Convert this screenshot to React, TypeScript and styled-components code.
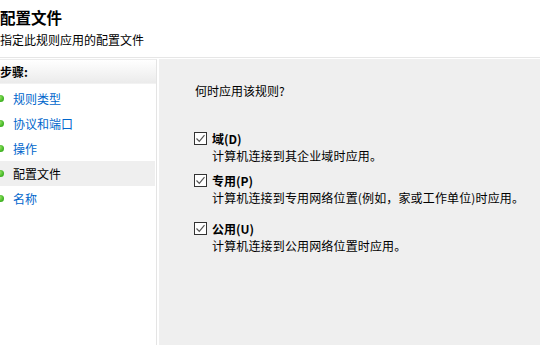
import React from "react";
import styled, { createGlobalStyle } from "styled-components";

const Global = createGlobalStyle`
  html, body { margin: 0; padding: 0; background: #ffffff; }
  body { width: 540px; height: 345px; overflow: hidden; font-family: "Noto Sans CJK SC", "Microsoft YaHei", sans-serif; color: #000; }
  * { box-sizing: border-box; }
`;

const Page = styled.div`
  width: 540px;
  height: 345px;
  display: flex;
  flex-direction: column;
  background: #fff;
`;

const Header = styled.header`
  height: 58px;
  padding-top: 7px;
  border-bottom: 1px solid #e6e6e6;
  display: flex;
  flex-direction: column;
`;

const Title = styled.h1`
  margin: 0;
  font-size: 15.5px;
  line-height: 20px;
  font-weight: 700;
`;

const Subtitle = styled.div`
  margin-top: 5px;
  font-size: 12px;
  line-height: 16px;
`;

const Main = styled.div`
  flex: 1;
  display: flex;
  gap: 2px;
  padding-top: 1px;
`;

const Steps = styled.nav`
  width: 157px;
  border-right: 1px solid #e4e4e4;
  border-top: 1px solid #ececec;
  display: flex;
  flex-direction: column;
`;

const StepsHeader = styled.div`
  height: 24px;
  display: flex;
  align-items: center;
  font-size: 12px;
  font-weight: 700;
  background: linear-gradient(#ffffff, #ebebeb);
  border-bottom: 1px solid #f2f2f2;
`;

const StepList = styled.ul`
  list-style: none;
  margin: 0;
  padding: 2px 1px 0 0;
`;

const Step = styled.li<{ $active?: boolean }>`
  height: 25px;
  display: flex;
  align-items: center;
  gap: 9px;
  margin-left: -3px;
  font-size: 12px;
  color: ${(p) => (p.$active ? "#000" : "#0066cc")};
  background: ${(p) => (p.$active ? "#efefef" : "transparent")};
`;

const Dot = styled.span`
  width: 7px;
  height: 7px;
  border-radius: 50%;
  background: radial-gradient(circle at 35% 35%, #9be86a, #3ab01e 70%);
  flex: none;
`;

const Content = styled.section`
  flex: 1;
  background: #efefef;
  padding: 24px 0 0 35px;
  font-size: 12px;
`;

const Question = styled.div`
  line-height: 16px;
  padding-left: 1px;
  margin-bottom: 31px;
`;

const Option = styled.div<{ $gap: number }>`
  margin-bottom: ${(p) => p.$gap}px;
`;

const OptionRow = styled.label`
  display: flex;
  align-items: center;
  gap: 5px;
  height: 17px;
  font-weight: 700;
`;

const Box = styled.span`
  width: 13px;
  height: 13px;
  border: 1px solid #333;
  background: #fff;
  display: flex;
  align-items: center;
  justify-content: center;
  flex: none;
`;

const Desc = styled.div`
  line-height: 17px;
  padding-left: 18px;
  letter-spacing: 0.15px;
`;

const Check = () => (
  <Box>
    <svg width="11" height="11" viewBox="0 0 11 11">
      <path d="M1.5 5.5 L4.3 8.3 L9.5 2.2" fill="none" stroke="#555" strokeWidth="1.2" />
    </svg>
  </Box>
);

const steps = ["规则类型", "协议和端口", "操作", "配置文件", "名称"];

const options = [
  { label: "域(D)", desc: "计算机连接到其企业域时应用。", gap: 8 },
  { label: "专用(P)", desc: "计算机连接到专用网络位置(例如，家或工作单位)时应用。", gap: 14 },
  { label: "公用(U)", desc: "计算机连接到公用网络位置时应用。", gap: 0 },
];

export default function App() {
  return (
    <Page>
      <Global />
      <Header>
        <Title>配置文件</Title>
        <Subtitle>指定此规则应用的配置文件</Subtitle>
      </Header>
      <Main>
        <Steps>
          <StepsHeader>步骤:</StepsHeader>
          <StepList>
            {steps.map((s) => (
              <Step key={s} $active={s === "配置文件"}>
                <Dot />
                {s}
              </Step>
            ))}
          </StepList>
        </Steps>
        <Content>
          <Question>何时应用该规则?</Question>
          {options.map((o) => (
            <Option key={o.label} $gap={o.gap}>
              <OptionRow>
                <Check />
                {o.label}
              </OptionRow>
              <Desc>{o.desc}</Desc>
            </Option>
          ))}
        </Content>
      </Main>
    </Page>
  );
}
